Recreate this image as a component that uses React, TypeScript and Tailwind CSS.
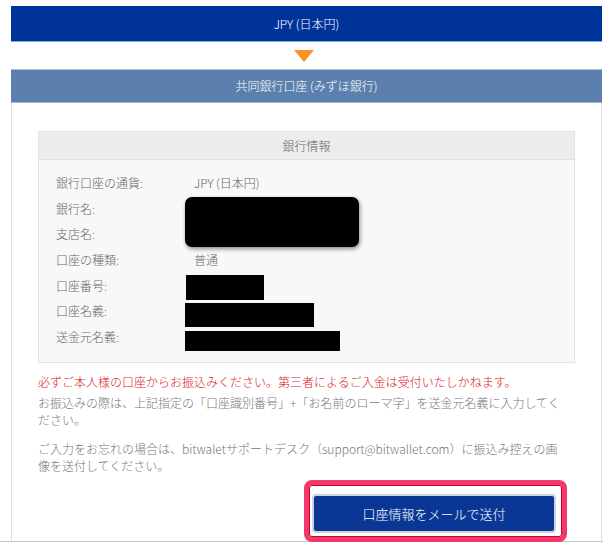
const rows: { label: string; value?: string }[] = [
  { label: '銀行口座の通貨:', value: 'JPY (日本円)' },
  { label: '銀行名:' },
  { label: '支店名:' },
  { label: '口座の種類:', value: '普通' },
  { label: '口座番号:' },
  { label: '口座名義:' },
  { label: '送金元名義:' },
];

function BankInfo() {
  return (
    <div className="border border-[#e2e2e2]">
      <div className="flex h-[28px] items-center justify-center border-b border-[#e2e2e2] bg-[#ececec] text-[12px] text-[#666]">
        銀行情報
      </div>
      <div className="relative bg-[#f8f8f8] pb-[12px] pl-[17px] pt-[10px]">
        {rows.map((r) => (
          <div key={r.label} className="flex h-[25.7px] items-center text-[12px] text-[#666]">
            <span className="w-[138px] shrink-0">{r.label}</span>
            <span>{r.value}</span>
          </div>
        ))}
        {/* blacked-out fields */}
        <div className="absolute left-[146px] top-[37px] h-[50px] w-[174px] rounded-[7px] bg-black shadow-[1px_2px_4px_rgba(0,0,0,0.45)]" />
        <div className="absolute left-[147px] top-[115px] h-[25px] w-[78px] bg-black" />
        <div className="absolute left-[146px] top-[143px] h-[24px] w-[129px] bg-black" />
        <div className="absolute left-[146px] top-[171px] h-[20px] w-[155px] bg-black" />
      </div>
    </div>
  );
}

export default function App() {
  return (
    <div
      className="h-[545px] w-[603px] overflow-hidden bg-white font-light"
      style={{ fontFamily: '"Noto Sans CJK JP", "Noto Sans", sans-serif' }}
    >
      <div className="pl-[11px] pr-[1px] pt-[6px]">
        <div className="flex h-[36px] items-center justify-center border-b border-[#78aef0] bg-[#00339a] text-[12px] text-white">
          JPY (日本円)
        </div>
        <div className="flex h-[27px] items-center justify-center pr-[6px]">
          <div className="h-0 w-0 border-x-[10px] border-t-[12px] border-x-transparent border-t-[#f7941f]" />
        </div>
        <div className="flex h-[34px] items-center justify-center border-y border-t-[#a9bdd6] border-b-[#9fb6d2] bg-[#5b80ad] text-[12px] text-white">
          共同銀行口座 (みずほ銀行)
        </div>
        <div className="flex h-[438px] flex-col border-x border-[#dedede] px-[26px] pt-[28px]">
          <BankInfo />
          <p className="mt-[10px] text-[12px] leading-[18px] text-[#e0121c]">
            必ずご本人様の口座からお振込みください。第三者によるご入金は受付いたしかねます。
          </p>
          <p className="mt-[3px] pr-[14px] text-[12px] leading-[17.5px] text-[#777]">
            お振込みの際は、上記指定の「口座識別番号」+「お名前のローマ字」を送金元名義に入力してください。
          </p>
          <p className="mt-[11px] pr-[14px] text-[12px] leading-[17.5px] text-[#777]">
            ご入力をお忘れの場合は、bitwaletサポートデスク（support@bitwallet.com）に振込み控えの画像を送付してください。
          </p>
          <div className="mt-auto flex justify-end pr-[8px]">
            <div className="relative z-10 -mb-px rounded-[8px] border-[5px] border-[#f3376a] pb-[4px] pl-[3px] pr-[6px] pt-[9px] shadow-[inset_0_0_0_1px_#c8002c]">
              <button className="flex h-[39px] w-[244px] items-center justify-center rounded-[4px] border-2 border-[#cfd3da] bg-[#0a3795] text-[13px] font-light text-white">
                口座情報をメールで送付
              </button>
            </div>
          </div>
        </div>
      </div>
      <div className="h-px bg-[#c4c4c4]" />
    </div>
  );
}
